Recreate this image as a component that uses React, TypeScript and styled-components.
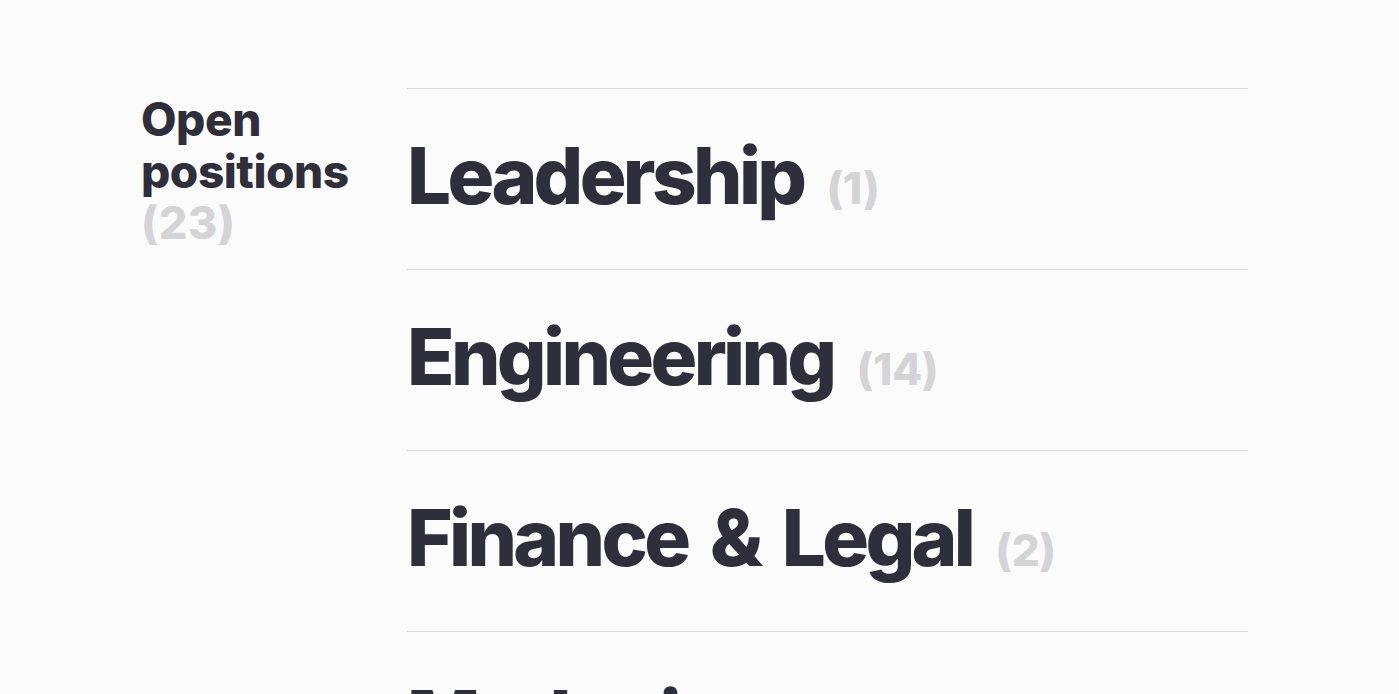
import React from "react";
import styled, { createGlobalStyle } from "styled-components";

const GlobalStyle = createGlobalStyle`
  html, body {
    margin: 0;
    padding: 0;
    background: #fbfbfc;
    overflow: hidden;
  }
  body {
    font-family: Inter, "Noto Sans", "Liberation Sans", sans-serif;
    color: #2f2e3b;
    -webkit-font-smoothing: antialiased;
  }
`;

const Page = styled.main`
  width: 1399px;
  height: 694px;
  overflow: hidden;
  background: #fbfbfc;
`;

const Section = styled.section`
  display: grid;
  grid-template-columns: 266px 841px;
  padding: 88px 0 0 141px;
`;

const Heading = styled.h2`
  margin: 5px 0 0;
  font-size: 46px;
  line-height: 52px;
  font-weight: 800;
  letter-spacing: -0.01em;
  color: #2f2e3b;
`;

const HeadingCount = styled.span`
  display: block;
  margin-top: 3px;
  font-size: 45px;
  line-height: 46px;
  letter-spacing: 0.01em;
  color: #d4d4d6;
`;

const List = styled.ul`
  list-style: none;
  margin: 0;
  padding: 0;
`;

const Row = styled.li`
  display: flex;
  align-items: baseline;
  gap: 23px;
  height: 180px;
  box-sizing: content-box;
  border-top: 1px solid #d9d9dc;
  padding: 0;
`;

const Title = styled.span`
  margin-top: 48px;
  font-size: 78px;
  line-height: 78px;
  font-weight: 800;
  letter-spacing: -0.047em;
  word-spacing: 9px;
  color: #2f2e3b;
`;

const Count = styled.span`
  font-size: 44px;
  line-height: 44px;
  font-weight: 800;
  letter-spacing: -0.01em;
  color: #d4d4d6;
`;

const departments = [
  { name: "Leadership", count: 1 },
  { name: "Engineering", count: 14 },
  { name: "Finance & Legal", count: 2 },
  { name: "Marketing", count: 3 },
];

export default function App() {
  return (
    <Page>
      <GlobalStyle />
      <Section>
        <Heading>
          Open
          <br />
          positions
          <HeadingCount>(23)</HeadingCount>
        </Heading>
        <List>
          {departments.map((d) => (
            <Row key={d.name}>
              <Title>{d.name}</Title>
              <Count>({d.count})</Count>
            </Row>
          ))}
        </List>
      </Section>
    </Page>
  );
}
